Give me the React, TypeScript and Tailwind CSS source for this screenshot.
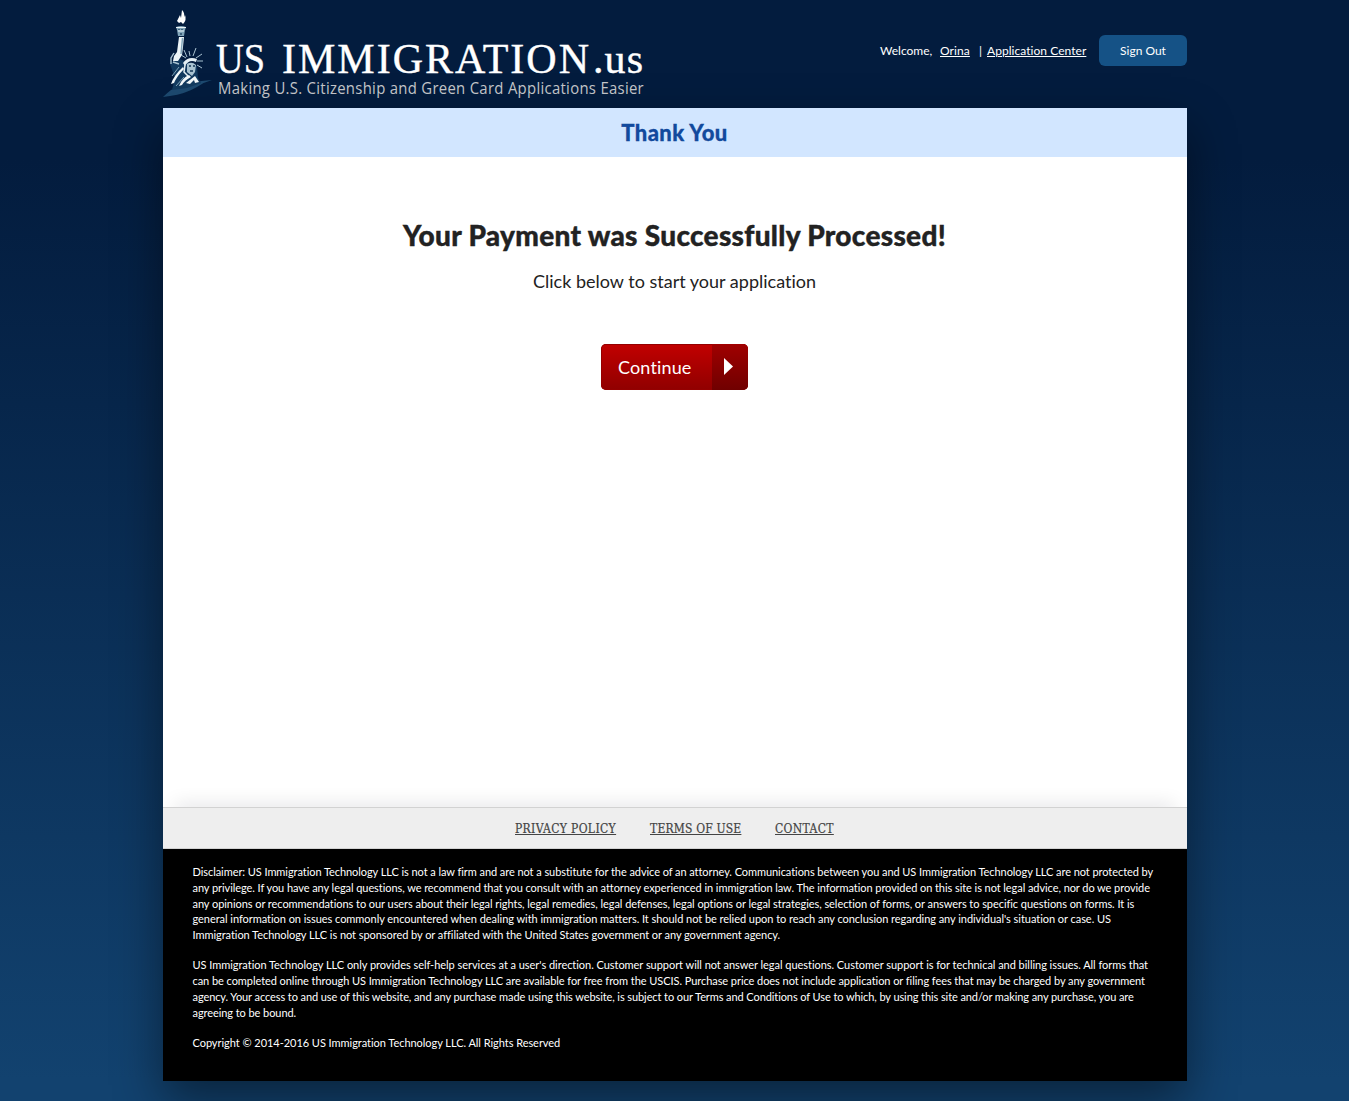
import React from "react";

type Line = { text: string; tracking?: string };

const disclaimer: Line[] = [
  { text: "Disclaimer: US Immigration Technology LLC is not a law firm and are not a substitute for the advice of an attorney. Communications between you and US Immigration Technology LLC are not protected by", tracking: "tracking-[-0.064px]" },
  { text: "any privilege. If you have any legal questions, we recommend that you consult with an attorney experienced in immigration law. The information provided on this site is not legal advice, nor do we provide", tracking: "tracking-[-0.067px]" },
  { text: "any opinions or recommendations to our users about their legal rights, legal remedies, legal defenses, legal options or legal strategies, selection of forms, or answers to specific questions on forms. It is", tracking: "tracking-[-0.058px]" },
  { text: "general information on issues commonly encountered when dealing with immigration matters. It should not be relied upon to reach any conclusion regarding any individual's situation or case. US", tracking: "tracking-[-0.044px]" },
  { text: "Immigration Technology LLC is not sponsored by or affiliated with the United States government or any government agency.", tracking: "tracking-[-0.052px]" },
];

const services: Line[] = [
  { text: "US Immigration Technology LLC only provides self-help services at a user's direction. Customer support will not answer legal questions. Customer support is for technical and billing issues. All forms that", tracking: "tracking-[-0.041px]" },
  { text: "can be completed online through US Immigration Technology LLC are available for free from the USCIS. Purchase price does not include application or filing fees that may be charged by any government", tracking: "tracking-[-0.06px]" },
  { text: "agency. Your access to and use of this website, and any purchase made using this website, is subject to our Terms and Conditions of Use to which, by using this site and/or making any purchase, you are", tracking: "tracking-[-0.09px]" },
  { text: "agreeing to be bound." },
];

function Lines({ lines, className = "" }: { lines: Line[]; className?: string }) {
  return (
    <p className={className}>
      {lines.map((line) => (
        <span key={line.text} className={`block whitespace-nowrap ${line.tracking ?? ""}`}>{line.text}</span>
      ))}
    </p>
  );
}

function Logo() {
  return (
    <svg className="block" width="490" height="108" viewBox="0 0 490 108" role="img" aria-label="US Immigration.us">
      {/* hillside and robe shadow */}
      <path d="M0 97Q4 93 8 90Q28 81 49 80Q41 82 34 87Q22 94 7 96Z" fill="#1d4a70" />
      <path d="M7 64L14 58L24 62L34 66L35 78L38 83L24 88L9 90L12 78Z" fill="#123a5f" />
      {/* flame */}
      <path d="M14 21L17 15L18 18L19 10Q22 13 21 17L22 15Q24 20 20 24L18 22L16 23Z" fill="#fff" />
      {/* torch */}
      <path d="M13 27Q18 25 23 27L22 30L21 36H15L14 30Z" fill="#7fa3b8" />
      <path d="M13 27.5H23M15 31H21" stroke="#eaf3f7" strokeWidth="1.2" />
      <path d="M16 29V30M19 29V30M18 33V35" stroke="#123654" strokeWidth="1.2" />
      {/* raised arm */}
      <path d="M16 37H21L20 47L19 55L15 61L10 61L11 56L14 52Z" fill="#edf5f8" />
      <path d="M19.5 38L18 54" stroke="#7fa3b8" strokeWidth="1.4" />
      {/* sleeve */}
      <path d="M11 53L8 58L8 64M10 62L16 64" stroke="#a9c3d1" strokeWidth="1.4" fill="none" />
      {/* crown rays */}
      <path d="M24 57L21 50M27 56L26 51M30 56L33 48M33 58L39 54M34 61L40 61M34 65L39 68M23 58L18 55" stroke="#a9c3d1" strokeWidth="1" />
      <path d="M20 63Q25 56 34 59L33 62Q26 59 22 66Z" fill="#e4eff4" />
      {/* face */}
      <path d="M24 64Q29 61 33 65L32 72L29 76L24 72Z" fill="#a9c3d1" />
      <path d="M26 66H28M30 66H32M27 71H30" stroke="#123654" strokeWidth="1.3" />
      <path d="M22 65L21 72L25 76" stroke="#e4eff4" strokeWidth="1.5" fill="none" />
      {/* robe folds */}
      <path d="M8 84Q11 75 20 67L21 69Q14 76 11 83Z" fill="#f2f8fa" />
      <path d="M16 86Q19 78 26 75L28 77Q22 80 19 85Z" fill="#f2f8fa" />
      <path d="M23 83L32 76L36 82L32 83L31 80L27 84Z" fill="#f2f8fa" />
      <path d="M9 76L16 67M13 86L21 77" stroke="#7fa3b8" strokeWidth="1" />
      <g fontFamily="Liberation Serif, serif" fontSize="42" fill="#fff" stroke="#fff" strokeWidth=".4">
        <text x="53" y="73" textLength="49" lengthAdjust="spacingAndGlyphs">US</text>
        <text x="119" y="73" textLength="307" lengthAdjust="spacing">IMMIGRATION</text>
        <text x="430" y="73" textLength="50">.us</text>
      </g>
      <text x="55" y="94" textLength="426" lengthAdjust="spacingAndGlyphs" fontFamily="Open Sans, sans-serif" fontSize="15.5" letterSpacing=".3" fill="#c6c8cb">Making U.S. Citizenship and Green Card Applications Easier</text>
    </svg>
  );
}

export default function App() {
  return (
    <div className="flex h-[1101px] justify-center overflow-hidden bg-[linear-gradient(180deg,#031c3e_0px,#031c3e_160px,#12426f_1080px)] pl-px font-['Lato',sans-serif] [font-variant-ligatures:none]">
      <div className="flex w-[1024px] flex-col">
        <header className="flex h-[108px] items-start justify-between">
          <Logo />
          <div className="mt-[35px] flex h-[31px] items-center text-[12px] whitespace-nowrap text-white">
            <span className="w-[60px]">Welcome,</span>
            <a className="w-[39px] tracking-[0.1px] underline">Orina</a>
            <span className="w-[8px]">|</span>
            <a className="w-[112px] tracking-[0.05px] underline">Application Center</a>
            <button className="h-[31px] w-[88px] rounded-[6px] bg-[#155286]">Sign Out</button>
          </div>
        </header>
        <div className="shadow-[0_20px_45px_rgba(0,0,0,0.45)]">
          <div className="flex h-[49px] items-center justify-center bg-[#d2e6ff] pr-px text-[22px] leading-none text-[#124a9d]">
            <h1 className="font-black tracking-[0.4px] [-webkit-text-stroke:0.3px_#124a9d]">Thank You</h1>
          </div>
          <main className="flex h-[650px] flex-col items-center bg-white pt-[58px] text-[#222]">
            <h2 className="-ml-px text-[28px] leading-10 font-black tracking-[0.3px] whitespace-nowrap [-webkit-text-stroke:0.4px_#222]">Your Payment was Successfully Processed!</h2>
            <p className="mt-[13px] -ml-px text-[18px] leading-[26px]">Click below to start your application</p>
            <button className="mt-[50px] -ml-px flex h-[46px] w-[147px] shrink-0 overflow-hidden rounded-[5px] bg-linear-to-b from-[#c20000] to-[#900000] text-[18px] text-white shadow-[inset_0_0_0_1px_#950000]">
              <span className="flex h-full w-[111px] items-center pl-[17px] tracking-[0.15px]">Continue</span>
              <span className="flex h-full flex-1 items-center bg-linear-to-b from-[#a00000] to-[#700000] pl-[11px]">
                <svg width="10" height="18" viewBox="0 0 10 18"><path d="M1 0L10 8.5L1 17Z" fill="#fff" /></svg>
              </span>
            </button>
            <div className="mt-auto w-full overflow-hidden px-3 pt-5">
              <div className="-mb-2 h-2 shadow-[0_0_20px_rgba(0,10,30,0.2)]" />
            </div>
          </main>
          <nav className="flex h-[42px] items-center border-y border-[#d2d2d2] bg-[#eee] pt-[2px] pl-[352px] font-['DejaVu_Serif_Condensed','DejaVu_Serif',serif] text-[12px] tracking-[0.35px] whitespace-nowrap text-[#444] [-webkit-text-stroke:0.2px_#444]">
            <a className="w-[135px] underline">PRIVACY POLICY</a>
            <a className="w-[125px] tracking-[0.18px] underline">TERMS OF USE</a>
            <a className="underline">CONTACT</a>
          </nav>
          <footer className="h-[232px] bg-black pt-[15px] pl-[29.5px] text-[11px] leading-[15.8px] tracking-[-0.07px] text-white">
            <Lines lines={disclaimer} className="mb-[14px]" />
            <Lines lines={services} className="mb-[14px] leading-4" />
            <p className="tracking-[-0.042px]">Copyright © 2014-2016 US Immigration Technology LLC. All Rights Reserved</p>
          </footer>
        </div>
      </div>
    </div>
  );
}
